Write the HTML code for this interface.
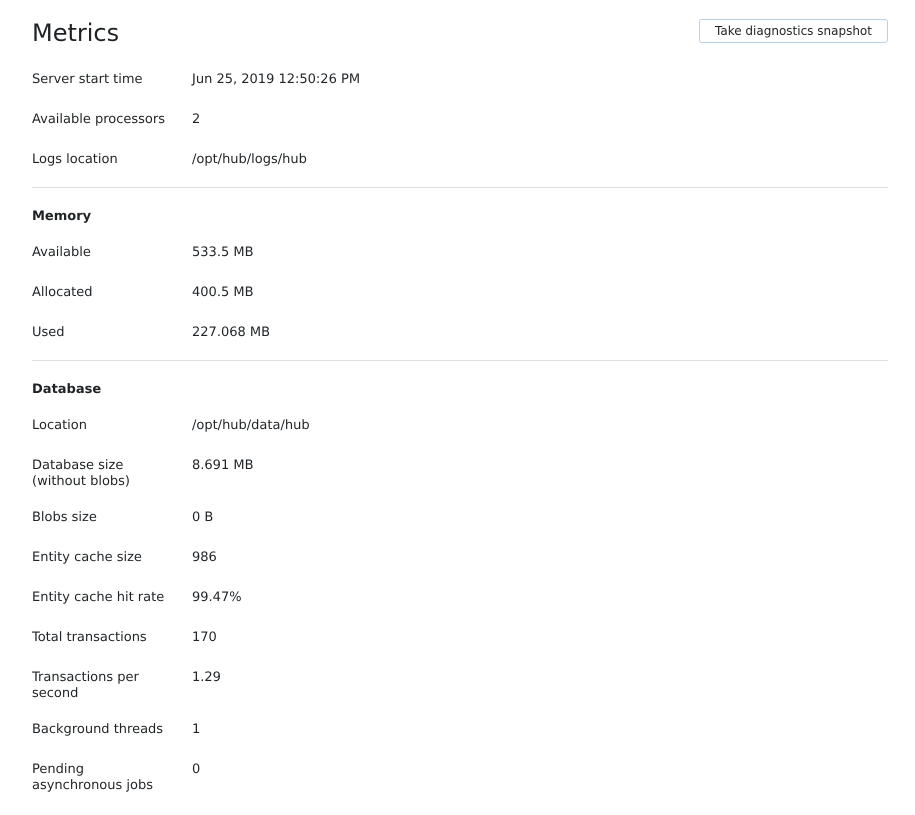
<!DOCTYPE html>
<html><head><meta charset="utf-8"><title>Metrics</title>
<style>
html,body{margin:0;padding:0;background:#fff;width:915px;height:815px;overflow:hidden}
body{position:relative;font:13px/16px "DejaVu Sans",sans-serif;color:#1f2326}
.a{position:absolute;white-space:nowrap;text-rendering:geometricPrecision;margin-top:1px}
.l{left:32px}.v{left:192px}
h1{position:absolute;left:32px;top:16px;margin:0;font-size:24px;line-height:34px;font-weight:400}
b{font-weight:700}
.hr{position:absolute;left:32px;width:856px;height:1px;background:#dfe1e5}
.btn{position:absolute;left:699px;top:19px;width:189px;height:24px;box-sizing:border-box;border:1px solid #b8d1e5;border-radius:3px;background:#fff;font-size:12px;line-height:22px;text-align:center;color:#1f2326}
</style></head><body>
<h1>Metrics</h1>
<div class="btn">Take diagnostics snapshot</div>
<div class="a l" style="top:71px">Server start time</div><div class="a v" style="top:71px">Jun 25, 2019 12:50:26 PM</div>
<div class="a l" style="top:111px">Available processors</div><div class="a v" style="top:111px">2</div>
<div class="a l" style="top:151px">Logs location</div><div class="a v" style="top:151px">/opt/hub/logs/hub</div>
<div class="hr" style="top:187px"></div>
<div class="a l" style="top:208px"><b>Memory</b></div>
<div class="a l" style="top:244px">Available</div><div class="a v" style="top:244px">533.5 MB</div>
<div class="a l" style="top:284px">Allocated</div><div class="a v" style="top:284px">400.5 MB</div>
<div class="a l" style="top:324px">Used</div><div class="a v" style="top:324px">227.068 MB</div>
<div class="hr" style="top:360px"></div>
<div class="a l" style="top:381px"><b>Database</b></div>
<div class="a l" style="top:417px">Location</div><div class="a v" style="top:417px">/opt/hub/data/hub</div>
<div class="a l" style="top:457px">Database size<br>(without blobs)</div><div class="a v" style="top:457px">8.691 MB</div>
<div class="a l" style="top:509px">Blobs size</div><div class="a v" style="top:509px">0 B</div>
<div class="a l" style="top:549px">Entity cache size</div><div class="a v" style="top:549px">986</div>
<div class="a l" style="top:589px">Entity cache hit rate</div><div class="a v" style="top:589px">99.47%</div>
<div class="a l" style="top:629px">Total transactions</div><div class="a v" style="top:629px">170</div>
<div class="a l" style="top:669px">Transactions per<br>second</div><div class="a v" style="top:669px">1.29</div>
<div class="a l" style="top:721px">Background threads</div><div class="a v" style="top:721px">1</div>
<div class="a l" style="top:761px">Pending<br>asynchronous jobs</div><div class="a v" style="top:761px">0</div>
</body></html>
